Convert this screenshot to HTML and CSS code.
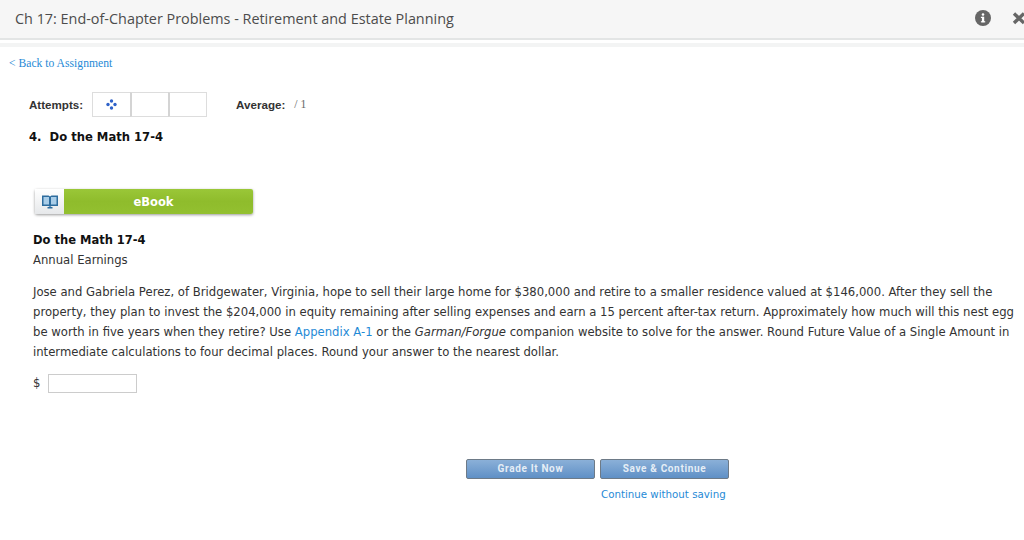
FILE: index.html
```html
<!DOCTYPE html>
<html lang="en">
<head>
<meta charset="utf-8">
<title>Do the Math 17-4</title>
<link rel="stylesheet" href="styles.css">
</head>
<body>
<header class="topbar">
  <h1 class="topbar-title">Ch 17: End-of-Chapter Problems - Retirement and Estate Planning</h1>
  <div class="topbar-icons">
    <svg class="icon-info" width="16" height="16" viewBox="0 0 16 16"><circle cx="8" cy="8" r="8" fill="#666"/><rect x="6.9" y="6.8" width="2.3" height="5.4" fill="#fff"/><rect x="5.9" y="6.8" width="3" height="1.2" fill="#fff"/><rect x="5.9" y="11.2" width="4.3" height="1.2" fill="#fff"/><circle cx="8" cy="4.5" r="1.3" fill="#fff"/></svg>
    <svg class="icon-close" width="12" height="14" viewBox="0 0 12 14"><path d="M2 2.5 L12 12 M12 2.5 L2 12" stroke="#666" stroke-width="3.4" fill="none"/></svg>
  </div>
</header>
<div class="topbar-strip"></div>
<main class="page">
  <a class="back-link" href="#">&lt; Back to Assignment</a>
  <div class="meta">
    <span class="meta-label">Attempts:</span>
    <div class="attempts">
      <div class="attempt">
        <svg width="11" height="11" viewBox="0 0 11 11"><g fill="#2f62c9"><circle cx="5.5" cy="2" r="1.7"/><circle cx="5.5" cy="9" r="1.7"/><circle cx="2" cy="5.5" r="1.7"/><circle cx="9" cy="5.5" r="1.7"/></g></svg>
      </div>
      <div class="attempt"></div>
      <div class="attempt"></div>
    </div>
    <span class="meta-label meta-average">Average:</span>
    <span class="meta-score">/ 1</span>
  </div>
  <h2 class="question-title">4.&nbsp; Do the Math 17-4</h2>
  <div class="ebook">
    <span class="ebook-icon">
      <svg width="18" height="15" viewBox="0 0 18 15"><path d="M1 1.500h6.500L9 2.500l1.500-1H17v10.500h-6.500l-1.500 1-1.500-1H1z" fill="#2d6c9e"/><path d="M2.500 3h5.500v7.500H2.500zM10 3h5.500v7.500H10z" fill="#a9cde8"/><path d="M6.500 13h5v1.500h-5z" fill="#2d6c9e"/></svg>
    </span>
    <span class="ebook-label">eBook</span>
  </div>
  <section class="problem">
    <h3 class="problem-title">Do the Math 17-4</h3>
    <p class="problem-sub">Annual Earnings</p>
    <p class="problem-text">Jose and Gabriela Perez, of Bridgewater, Virginia, hope to sell their large home for $380,000 and retire to a smaller residence valued at $146,000. After they sell the property, they plan to invest the $204,000 in equity remaining after selling expenses and earn a 15 percent after-tax return. Approximately how much will this nest egg be worth in five years when they retire? Use <a href="#">Appendix A-1</a> or the <em>Garman/Forgue</em> companion website to solve for the answer. Round Future Value of a Single Amount in intermediate calculations to four decimal places. Round your answer to the nearest dollar.</p>
    <div class="answer"><span>$</span><input class="answer-input" type="text" aria-label="Answer"></div>
  </section>
  <div class="actions">
    <div class="buttons">
      <button class="btn" type="button">Grade It Now</button>
      <button class="btn" type="button">Save &amp; Continue</button>
    </div>
    <a class="skip-link" href="#">Continue without saving</a>
  </div>
</main>
</body>
</html>
```
FILE: styles.css
```css
html, body { margin: 0; padding: 0; background: #fff; overflow: hidden; }
body { width: 1024px; height: 540px; font-family: "DejaVu Sans", Verdana, sans-serif; color: #222; }

.topbar { box-sizing: border-box; height: 40px; padding: 0 0 3px 15px; background: #f6f6f6; border-bottom: 2px solid #e3e5e5; display: flex; align-items: center; justify-content: space-between; overflow: hidden; }
.topbar-title { margin: 2px 0 0; font: 400 14.400px/20px "Open Sans", sans-serif; color: #4c4c4c; }
.topbar-icons { display: flex; align-items: center; gap: 21px; }
.icon-info, .icon-close { display: block; }
.topbar-strip { height: 4px; margin-top: 3px; background: #f3f4f4; }

.page { padding: 0 0 0 9px; }
.back-link { display: block; margin-top: 10px; font: 11.650px/14px "Liberation Serif", serif; color: #1f8ad6; text-decoration: none; }

.meta { display: flex; align-items: center; height: 26px; margin: 20px 0 0 20px; }
.meta-label { padding-top: 1px; font: 700 11.600px/14px "Liberation Sans", sans-serif; color: #333; }
.attempts { display: flex; margin-left: 9px; }
.attempt { box-sizing: border-box; width: 39px; height: 25px; border: 1px solid #ddd; margin-right: -1px; display: flex; align-items: center; justify-content: center; }
.attempt + .attempt { border-left: 2px solid #d4d4d4; }
.meta-average { margin-left: 30px; }
.meta-score { margin-left: 9px; padding-top: 1px; font: 11.650px/14px "Liberation Serif", serif; color: #666; }

.question-title { margin: 10px 0 0 20px; font: 700 11.600px/20px "DejaVu Sans", sans-serif; color: #111; }

.ebook { display: flex; width: 218px; height: 25px; margin: 42px 0 0 26px; box-shadow: 0 1px 3px rgba(0,0,0,.4); border-radius: 2px; }
.ebook-icon { width: 29px; background: linear-gradient(#fff, #e6e8ea); display: flex; align-items: center; justify-content: center; }
.ebook-label { box-sizing: border-box; flex: 1; padding: 2px 10px 0 0; background: linear-gradient(#9ac738, #8fbc2c 50%, #93c030); color: #fff; font: 700 11.500px/23px "DejaVu Sans", sans-serif; text-align: center; border-radius: 0 2px 2px 0; }

.problem { margin: 16px 0 0 24px; font-size: 11.650px; line-height: 20px; color: #333; }
.problem-title { margin: 0; font: 700 11.500px/20px "DejaVu Sans", sans-serif; color: #111; }
.problem-sub { margin: 0; }
.problem-text { margin: 12px 0 0; width: 985px; }
.problem-text a { color: #1f8ad6; text-decoration: none; }
.answer { display: flex; align-items: center; gap: 8px; margin-top: 11px; }
.answer-input { box-sizing: border-box; width: 89px; height: 19px; border: 1px solid #ccc; background: #fff; padding: 0; margin: 0; }

.actions { width: 263px; margin: 66px 0 0 457px; }
.buttons { display: flex; gap: 5px; }
.btn { box-sizing: border-box; width: 129px; height: 20px; padding: 0; border: 1px solid #6d7a87; border-radius: 2px; background: linear-gradient(#8bb0d8, #5f90c6); color: #e6eef6; font: 700 10px/16px Roboto, sans-serif; letter-spacing: .65px; }
.skip-link { display: block; margin: 8px 0 0 135px; font-size: 10.250px; line-height: 14px; color: #1f8ad6; text-decoration: none; }
```
